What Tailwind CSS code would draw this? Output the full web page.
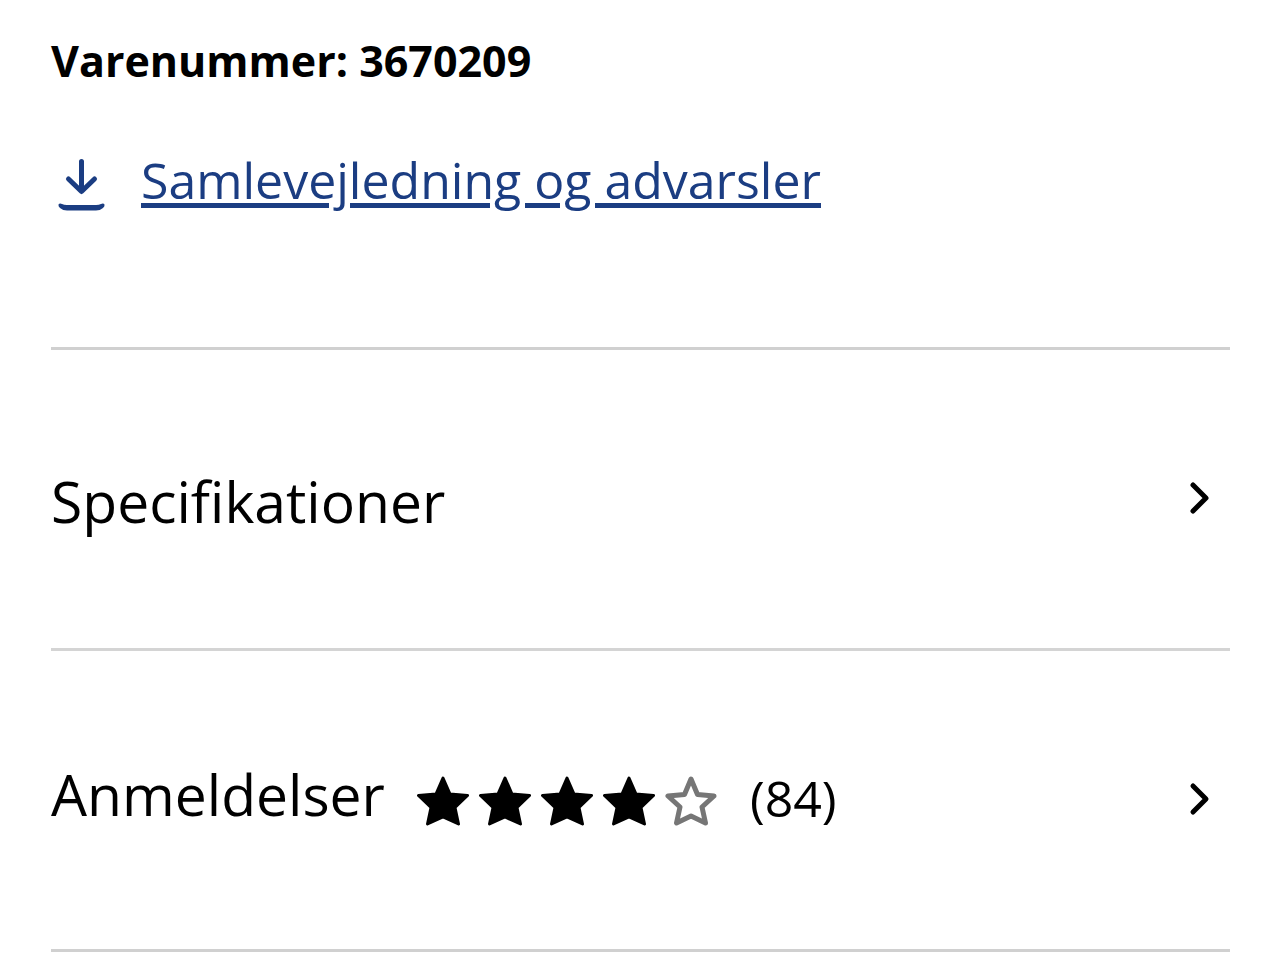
<!DOCTYPE html>
<html lang="da">
<head>
    <meta charset="UTF-8">
    <meta name="viewport" content="width=device-width, initial-scale=1.0">
    <title>Produktinformation</title>
    <script src="https://cdn.jsdelivr.net/npm/@tailwindcss/browser@4"></script>
</head>
<body class="bg-white text-black font-['Open_Sans',sans-serif]">
    <main class="pl-[51px] pr-[50px]">
        <!-- Varenummer og vejledning -->
        <section class="pt-[31px] pb-[129px] border-b-3 border-[#d0d0d0]">
            <p class="text-[43px] leading-[60px] font-bold">Varenummer: 3670209</p>
            <a href="#" class="mt-[51px] flex items-center text-[50px] leading-[76px] text-[#1b3d82]">
                <svg class="w-[62px] h-[62px] mr-[28px]" viewBox="0 0 62 62" aria-hidden="true">
                    <path d="M30.500 12.500V41M17.500 30L30.500 42.500L43.500 30" fill="none" stroke="currentColor" stroke-width="5" stroke-linecap="round" stroke-linejoin="round"/>
                    <path d="M7.500 55.500Q8.500 54 11 55Q13 56 16 56H45Q48 56 50 55Q52.500 54 53.500 55.500Q54 57 52 59Q49 61.500 45 61.500H16Q12 61.500 9 59Q7 57 7.500 55.500Z" fill="currentColor"/>
                </svg>
                <span class="underline decoration-[5px] underline-offset-4">Samlevejledning og advarsler</span>
            </a>
        </section>

        <!-- Specifikationer -->
        <button type="button" class="w-full h-[301px] flex items-center justify-between text-left border-b-3 border-[#d4d4d4]">
            <span class="pt-1 text-[57px] leading-[76px]">Specifikationer</span>
            <svg class="w-[62px] h-[62px]" viewBox="0 0 62 62" fill="none" stroke="currentColor" stroke-width="5" stroke-linecap="round" stroke-linejoin="round" aria-hidden="true">
                <path d="M25 17L38 30L25 43"/>
            </svg>
        </button>

        <!-- Anmeldelser -->
        <button type="button" class="w-full h-[301px] flex items-center justify-between text-left border-b-3 border-[#d0d0d0]">
            <span class="pb-3 flex items-center">
                <span class="text-[57px] leading-[76px]">Anmeldelser</span>
                <span class="ml-8 mt-[14px] flex gap-[10px]">
                    <svg class="w-[52px] h-[50px]" viewBox="0 0 52 50" fill="currentColor" stroke="currentColor" stroke-width="3" stroke-linejoin="round"><path d="M26 2L33 18L50.500 19.500L38 31.500L41.500 48L26 41L10.500 48L14 31.500L1.500 19.500L19 18Z"/></svg>
                    <svg class="w-[52px] h-[50px]" viewBox="0 0 52 50" fill="currentColor" stroke="currentColor" stroke-width="3" stroke-linejoin="round"><path d="M26 2L33 18L50.500 19.500L38 31.500L41.500 48L26 41L10.500 48L14 31.500L1.500 19.500L19 18Z"/></svg>
                    <svg class="w-[52px] h-[50px]" viewBox="0 0 52 50" fill="currentColor" stroke="currentColor" stroke-width="3" stroke-linejoin="round"><path d="M26 2L33 18L50.500 19.500L38 31.500L41.500 48L26 41L10.500 48L14 31.500L1.500 19.500L19 18Z"/></svg>
                    <svg class="w-[52px] h-[50px]" viewBox="0 0 52 50" fill="currentColor" stroke="currentColor" stroke-width="3" stroke-linejoin="round"><path d="M26 2L33 18L50.500 19.500L38 31.500L41.500 48L26 41L10.500 48L14 31.500L1.500 19.500L19 18Z"/></svg>
                    <svg class="w-[52px] h-[50px] text-[#767676]" viewBox="0 0 52 50" fill="none" stroke="currentColor" stroke-width="5" stroke-linejoin="round"><path d="M26 3L32.500 18.500L49 20L37 31L40.500 47L26 40L11.500 47L15 31L3 20L19.500 18.500Z"/></svg>
                </span>
                <span class="ml-[33px] mt-2 text-[50px] leading-[64px]">(84)</span>
            </span>
            <svg class="w-[62px] h-[62px]" viewBox="0 0 62 62" fill="none" stroke="currentColor" stroke-width="5" stroke-linecap="round" stroke-linejoin="round" aria-hidden="true">
                <path d="M25 17L38 30L25 43"/>
            </svg>
        </button>
    </main>
</body>
</html>
